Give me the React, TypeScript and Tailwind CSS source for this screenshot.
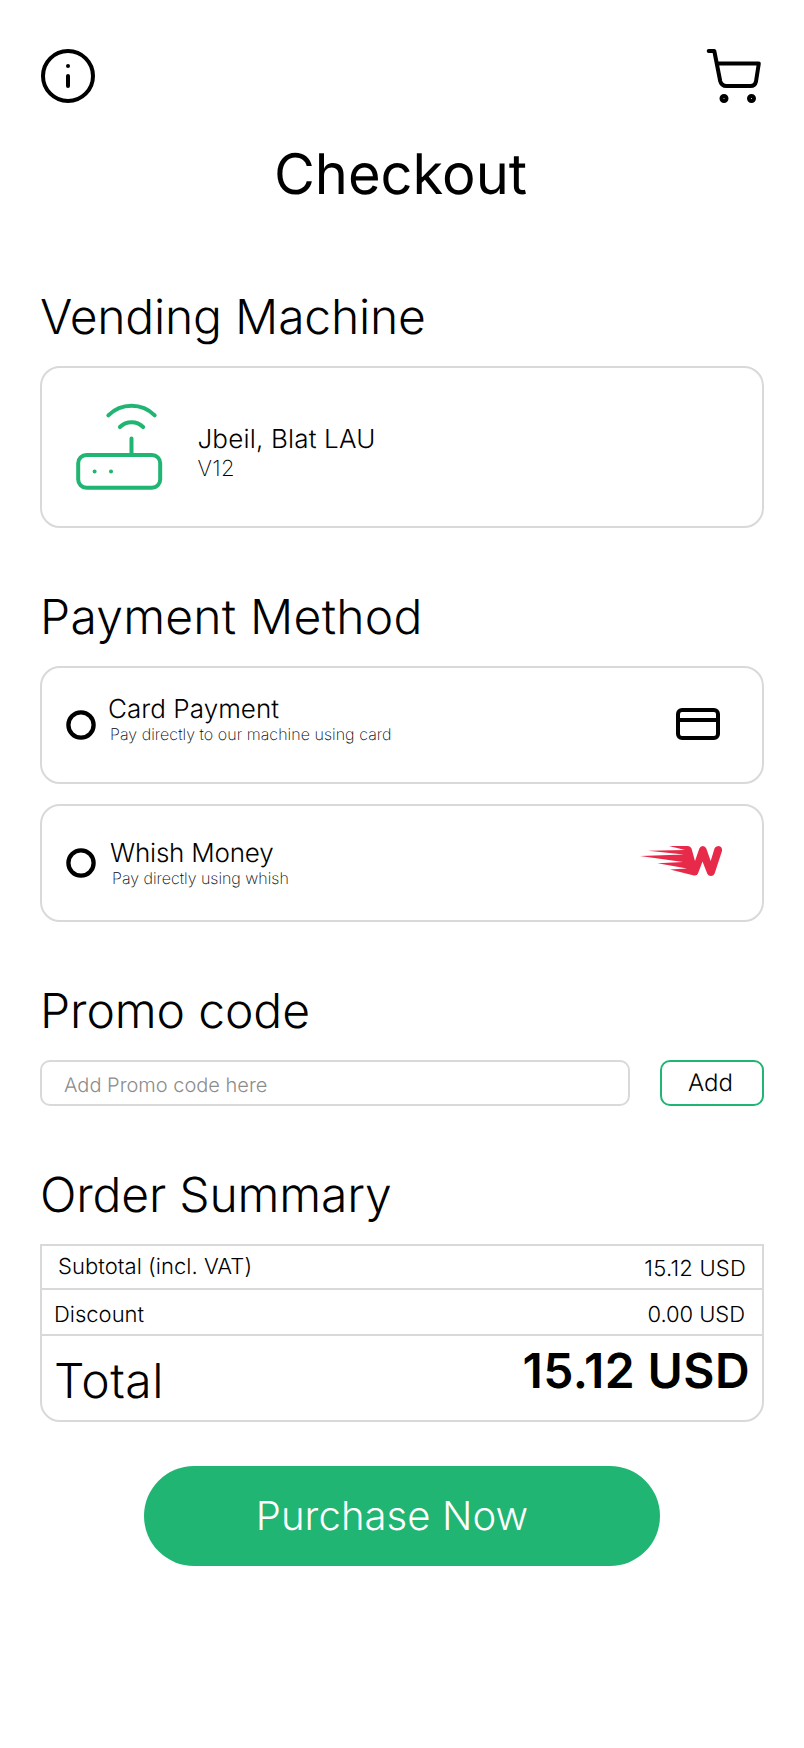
import React from "react";

function Heading({ className, children }: { className: string; children: React.ReactNode }) {
  return <h2 className={`h-[58px] text-5xl leading-[58px] font-light whitespace-nowrap ${className}`}>{children}</h2>;
}

function Radio() {
  return (
    <svg className="shrink-0" width="30" height="30" viewBox="0 0 30 30" fill="none" stroke="black" strokeWidth="4.300">
      <circle cx="15" cy="15" r="12.600" />
    </svg>
  );
}

function InfoIcon() {
  return (
    <svg width="60" height="60" viewBox="0 0 60 60" fill="none" stroke="black" strokeWidth="4" strokeLinecap="round">
      <circle cx="30" cy="30" r="25" />
      <path d="M30 20h.01M30 30v10" />
    </svg>
  );
}

function CartIcon() {
  return (
    <svg width="62" height="60" viewBox="0 0 62 60" fill="none" stroke="black" strokeWidth="4" strokeLinecap="round" strokeLinejoin="round">
      <path d="M4.7 5H10.3L16.2 35Q17.400 40 22.500 40H46.500Q51 40 52 35.500L54.800 17.500H13" />
      <circle cx="20" cy="52.5" r="2.5" />
      <circle cx="47.5" cy="52.5" r="2.5" />
    </svg>
  );
}

function RouterIcon() {
  return (
    <svg width="98.4" height="98.4" viewBox="0 -0.15 24 24" fill="none" stroke="#21B573" strokeWidth="0.976" strokeLinecap="round" strokeLinejoin="round">
      <rect x="2" y="14" width="20" height="8" rx="2" />
      <path d="M6.01 18H6M10.01 18H10M15 10v4M17.84 7.17a4 4 0 0 0-5.66 0M20.66 4.34a8 8 0 0 0-11.31 0" />
    </svg>
  );
}

function CardIcon() {
  return (
    <svg className="mb-0.5" width="44" height="32" viewBox="0 0 44 32" fill="none" stroke="black" strokeWidth="4">
      <rect x="2" y="2" width="40" height="28" rx="4" />
      <path d="M2 12h40" />
    </svg>
  );
}

function WhishLogo() {
  return (
    <svg className="mb-1" width="82" height="30" viewBox="0 0 82 30" fill="#E72A4A">
      <path d="M29 0H48Q50.500 0 51.500 2.500L55 15L59.300 2.500Q60.300 0 62.800 0Q65.300 0 66.300 2.500L70.700 15L74.500 2.500Q75.500 0 79 0Q82.500 .5 82 5L74.800 27Q73.800 30 71 30Q68 30 67 27L62.500 15.500L58 27.500Q57 30 54 29.500L30 23.500L47 22.500L17.500 17.300L43 16L0 10L44 8.500L8 4.700L45 4Z" />
    </svg>
  );
}

export default function App() {
  return (
    <main className="flex h-[1748px] w-[804px] flex-col bg-white px-10 font-['Inter',sans-serif] text-black [text-rendering:geometricPrecision]">
      <header className="-mx-0.5 flex h-[106px] items-end justify-between">
        <InfoIcon />
        <CartIcon />
      </header>
      <h1 className="mt-[34px] h-[68px] pr-[3px] text-center text-[56px] leading-[68px] font-normal">Checkout</h1>

      <section className="mt-20 flex flex-col gap-5">
        <Heading className="tracking-[-0.2px]">Vending Machine</Heading>
        <div className="flex h-[162px] items-start rounded-[20px] border-2 border-[#d9d9d9] pt-[29px] pl-[28px]">
          <RouterIcon />
          <div className="mt-[27px] ml-[29px]">
            <p className="text-[26px] leading-8 font-light tracking-[0.18px]">Jbeil, Blat LAU</p>
            <p className="text-[22px] leading-[27px] font-extralight tracking-[0.4px]">V12</p>
          </div>
        </div>
      </section>

      <section className="mt-[60px] flex flex-col">
        <Heading className="tracking-[0.24px]">Payment Method</Heading>
        <div className="mt-5 flex h-[118px] items-center rounded-[20px] border-2 border-[#d9d9d9] pr-[42px] pl-6">
          <Radio />
          <div className="mb-3 ml-3 flex-1">
            <p className="text-[26px] leading-8 font-light tracking-[0.05px]">Card Payment</p>
            <p className="-mt-[3px] pl-0.5 text-base leading-[22px] font-extralight tracking-[0.05px]">Pay directly to our machine using card</p>
          </div>
          <CardIcon />
        </div>
        <div className="mt-5 flex h-[118px] items-center rounded-[20px] border-2 border-[#d9d9d9] pr-10 pl-6">
          <Radio />
          <div className="ml-[14px] flex-1">
            <p className="text-[26px] leading-8 font-light tracking-[-0.2px]">Whish Money</p>
            <p className="-mt-[3px] pl-0.5 text-base leading-[22px] font-extralight">Pay directly using whish</p>
          </div>
          <WhishLogo />
        </div>
      </section>

      <section className="mt-[60px] flex flex-col gap-5">
        <Heading className="tracking-[-0.1px]">Promo code</Heading>
        <div className="flex h-[46px] gap-[30px]">
          <input className="min-w-0 flex-1 rounded-[10px] border-2 border-[#d9d9d9] px-[22px] pt-1 text-xl font-light outline-none [text-rendering:geometricPrecision] placeholder:text-[#8c8c8c]" placeholder="Add Promo code here" />
          <button className="w-[104px] rounded-[10px] border-2 border-[#21B573] pr-[3px] text-2xl font-light [text-rendering:geometricPrecision]">Add</button>
        </div>
      </section>

      <section className="mt-[60px] flex flex-col gap-5">
        <Heading className="tracking-[-0.17px]">Order Summary</Heading>
        <div className="h-[178px] rounded-b-[20px] border-2 border-[#d9d9d9] font-light">
          <div className="flex h-[44px] justify-between border-b-2 border-[#d9d9d9] pr-4 pl-4 text-[22px]">
            <span className="leading-[42px] tracking-[0.05px]">Subtotal (incl. VAT)</span>
            <span className="leading-[46px] tracking-[0.22px]">15.12 USD</span>
          </div>
          <div className="flex h-[46px] justify-between border-b-2 border-[#d9d9d9] pr-[17px] pl-3 text-[22px]">
            <span className="leading-[50px]">Discount</span>
            <span className="leading-[50px] tracking-[-0.05px]">0.00 USD</span>
          </div>
          <div className="flex justify-between pr-3 pl-3 text-5xl">
            <span className="mt-4 leading-[58px] tracking-[0.5px]">Total</span>
            <span className="mt-1.5 leading-[58px] font-semibold tracking-[0.4px]">15.12 USD</span>
          </div>
        </div>
      </section>

      <button className="mt-11 ml-[104px] h-[100px] w-[516px] shrink-0 rounded-full bg-[#21B573] pr-5 text-[40px] font-light tracking-[0.1px] text-white [text-rendering:geometricPrecision]">Purchase Now</button>
    </main>
  );
}
